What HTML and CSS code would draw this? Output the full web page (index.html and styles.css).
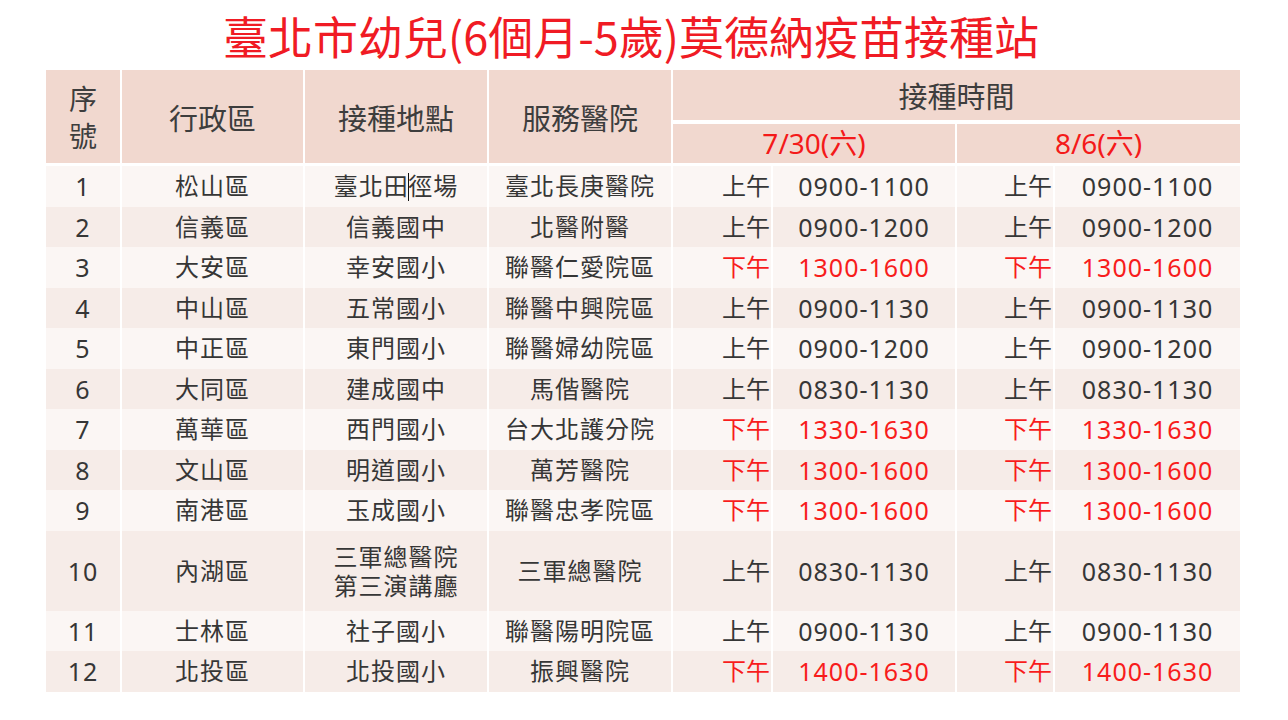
FILE: index.html
```html
<!DOCTYPE html>
<html lang="zh-Hant">
<head>
<meta charset="utf-8">
<title>臺北市幼兒莫德納疫苗接種站</title>
<link rel="stylesheet" href="styles.css">
</head>
<body>
<div class="page">
  <h1 class="title">臺北市幼兒(6個月-5歲)莫德納疫苗接種站</h1>
  <table class="sched">
    <colgroup>
      <col class="w-no"><col class="w-dist"><col class="w-site"><col class="w-hosp">
      <col class="w-ap1"><col class="w-t1"><col class="w-ap2"><col class="w-t2">
    </colgroup>
    <thead>
      <tr class="h1">
        <th rowspan="2" class="hd first"><span class="stack">序<br>號</span></th>
        <th rowspan="2" class="hd">行政區</th>
        <th rowspan="2" class="hd">接種地點</th>
        <th rowspan="2" class="hd">服務醫院</th>
        <th colspan="4" class="hd grp">接種時間</th>
      </tr>
      <tr class="h2">
        <th colspan="2" class="hd date">7/30(六)</th>
        <th colspan="2" class="hd date">8/6(六)</th>
      </tr>
    </thead>
    <tbody>
      <tr><td class="first">1</td><td>松山區</td><td>臺北田<span class="caret"></span>徑場</td><td>臺北長庚醫院</td><td class="ap">上午</td><td>0900-1100</td><td class="ap">上午</td><td>0900-1100</td></tr>
      <tr><td class="first">2</td><td>信義區</td><td>信義國中</td><td>北醫附醫</td><td class="ap">上午</td><td>0900-1200</td><td class="ap">上午</td><td>0900-1200</td></tr>
      <tr class="pm"><td class="first">3</td><td>大安區</td><td>幸安國小</td><td>聯醫仁愛院區</td><td class="ap">下午</td><td>1300-1600</td><td class="ap">下午</td><td>1300-1600</td></tr>
      <tr><td class="first">4</td><td>中山區</td><td>五常國小</td><td>聯醫中興院區</td><td class="ap">上午</td><td>0900-1130</td><td class="ap">上午</td><td>0900-1130</td></tr>
      <tr><td class="first">5</td><td>中正區</td><td>東門國小</td><td>聯醫婦幼院區</td><td class="ap">上午</td><td>0900-1200</td><td class="ap">上午</td><td>0900-1200</td></tr>
      <tr><td class="first">6</td><td>大同區</td><td>建成國中</td><td>馬偕醫院</td><td class="ap">上午</td><td>0830-1130</td><td class="ap">上午</td><td>0830-1130</td></tr>
      <tr class="pm"><td class="first">7</td><td>萬華區</td><td>西門國小</td><td>台大北護分院</td><td class="ap">下午</td><td>1330-1630</td><td class="ap">下午</td><td>1330-1630</td></tr>
      <tr class="pm"><td class="first">8</td><td>文山區</td><td>明道國小</td><td>萬芳醫院</td><td class="ap">下午</td><td>1300-1600</td><td class="ap">下午</td><td>1300-1600</td></tr>
      <tr class="pm"><td class="first">9</td><td>南港區</td><td>玉成國小</td><td>聯醫忠孝院區</td><td class="ap">下午</td><td>1300-1600</td><td class="ap">下午</td><td>1300-1600</td></tr>
      <tr class="tall"><td class="first">10</td><td>內湖區</td><td class="two">三軍總醫院<br>第三演講廳</td><td>三軍總醫院</td><td class="ap">上午</td><td>0830-1130</td><td class="ap">上午</td><td>0830-1130</td></tr>
      <tr><td class="first">11</td><td>士林區</td><td>社子國小</td><td>聯醫陽明院區</td><td class="ap">上午</td><td>0900-1130</td><td class="ap">上午</td><td>0900-1130</td></tr>
      <tr class="pm"><td class="first">12</td><td>北投區</td><td>北投國小</td><td>振興醫院</td><td class="ap">下午</td><td>1400-1630</td><td class="ap">下午</td><td>1400-1630</td></tr>
    </tbody>
  </table>
</div>
</body>
</html>
```

FILE: styles.css
```css
html, body {
  margin: 0;
  padding: 0;
  background: #ffffff;
}

body {
  font-family: "Noto Sans", "Noto Sans CJK TC", sans-serif;
  color: #363636;
}

.page {
  width: 1288px;
  padding-top: 8px;
}

.title {
  margin: 0;
  padding-right: 26px;
  height: 62px;
  line-height: 56px;
  text-align: center;
  font-family: "Noto Sans CJK TC", sans-serif;
  font-weight: 400;
  font-size: 45px;
  color: #f01b24;
}

.sched {
  margin-left: 46px;
  width: 1194px;
  table-layout: fixed;
  border-collapse: separate;
  border-spacing: 0;
}

.w-no { width: 74px; }
.w-dist { width: 183px; }
.w-site { width: 184px; }
.w-hosp { width: 184px; }
.w-ap1 { width: 100px; }
.w-t1 { width: 184px; }
.w-ap2 { width: 98px; }
.w-t2 { width: 187px; }

.sched th,
.sched td {
  padding: 0;
  border-left: 2px solid #ffffff;
  text-align: center;
  vertical-align: middle;
  white-space: nowrap;
}

.sched th.first,
.sched td.first {
  border-left: 0;
}

.hd {
  background: #f1d8cf;
  font-family: "Noto Sans CJK TC", sans-serif;
  font-weight: 400;
  font-size: 29px;
  color: #3d3d3d;
  border-bottom: 3px solid #ffffff;
}

.h1 { height: 54px; }

.hd.grp {
  border-bottom: 4px solid #ffffff;
  line-height: 50px;
}

.hd.date {
  height: 39px;
  font-family: "Noto Sans", "Noto Sans CJK TC", sans-serif;
  font-size: 28px;
  color: #f41a1a;
  line-height: 39px;
}

.stack {
  display: block;
  line-height: 37px;
  font-size: 28px;
}

.sched tbody tr {
  height: 40.5px;
  background: #fbf6f4;
}

.sched tbody tr:nth-child(even) {
  background: #f6ece8;
}

.sched tbody tr.tall {
  height: 80px;
}

.sched td {
  font-size: 24px;
  line-height: 30px;
  letter-spacing: 1px;
}

.sched td:nth-child(6),
.sched td:nth-child(8),
.sched td.first {
  font-size: 25px;
}

.sched td.ap {
  text-align: right;
  padding-right: 1px;
  letter-spacing: 0;
}

.sched td.two {
  line-height: 29px;
}

.sched tr.pm td:nth-child(n+5) {
  color: #f81c1c;
}

.caret {
  display: inline-block;
  width: 0;
  height: 28px;
  border-left: 1.5px solid #111111;
  vertical-align: -6px;
  margin: 0 -1px 0 -0.5px;
}
```
